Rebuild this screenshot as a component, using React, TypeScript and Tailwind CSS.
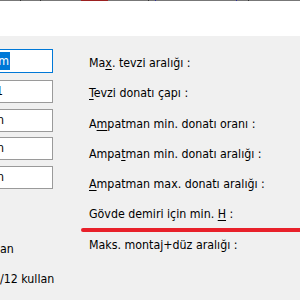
import React from "react";

const U = ({ children }: { children: React.ReactNode }) => (
  <span className="underline decoration-1 underline-offset-2">{children}</span>
);

function Box({ children, focused = false, className = "" }: { children?: React.ReactNode; focused?: boolean; className?: string }) {
  return (
    <div
      className={
        "ml-[-30px] w-[83px] bg-white flex items-center justify-end " +
        (focused ? "h-[24px] border border-[#0078d7]" : "h-[23px] border border-[#9a9a9a]") +
        " " +
        className
      }
    >
      {children}
    </div>
  );
}

export default function App() {
  return (
    <div
      className="w-[300px] h-[300px] overflow-hidden bg-[#f0f0f0] text-[12.3px] text-black leading-none"
      style={{ fontFamily: '"DejaVu Sans Condensed", "DejaVu Sans", sans-serif' }}
    >
      <div className="flex h-[1px] bg-[#777777]">
        <div className="w-[20px]" />
        <div className="w-[1px] bg-[#333333]" />
        <div className="w-[19px]" />
        <div className="w-[1px] bg-[#333333]" />
        <div className="w-[40px]" />
        <div className="w-[27px] bg-[#9b2020]" />
        <div className="w-[40px]" />
        <div className="w-[1px] bg-[#333333]" />
        <div className="w-[6px]" />
        <div className="w-[1px] bg-[#3030a0]" />
        <div className="w-[80px]" />
        <div className="w-[1px] bg-[#3030a0]" />
        <div className="w-[11px]" />
        <div className="w-[1px] bg-[#333333]" />
      </div>
      <div className="h-[35px] bg-white" />
      <div className="flex">
        <div className="w-[89px] flex flex-col pt-[13px]">
          <Box focused className="pr-[42px]">
            <span className="bg-[#0078d7] text-white h-[18px] pl-[30px] pr-[1px] flex items-center">m</span>
          </Box>
          <Box className="mt-[7px] pr-[49px]">1</Box>
          <Box className="mt-[6px] pr-[48px]">n</Box>
          <Box className="mt-[5px] pr-[48px]">n</Box>
          <Box className="mt-[6px] pr-[48px]">n</Box>
          <div className="mt-[53px] h-[14px] leading-[14px]">an</div>
          <div className="mt-[16px] h-[14px] leading-[14px]">/12 kullan</div>
        </div>
        <div className="flex flex-col pt-[20px] gap-[16.3px] whitespace-nowrap">
          <div className="h-[14px] leading-[14px]">Ma<U>x</U>. tevzi aralığı :</div>
          <div className="h-[14px] leading-[14px]"><U>T</U>evzi donatı çapı :</div>
          <div className="h-[14px] leading-[14px]">A<U>m</U>patman min. donatı oranı :</div>
          <div className="h-[14px] leading-[14px]">Ampa<U>t</U>man min. donatı aralığı :</div>
          <div className="h-[14px] leading-[14px]"><U>A</U>mpatman max. donatı aralığı :</div>
          <div className="relative h-[14px] leading-[14px]">
            Gövde demiri için min. <U>H</U> :
            <div className="absolute left-[-8px] top-[21px] w-[240px] h-[4px] rounded-full bg-[#e8202a]" />
          </div>
          <div className="h-[14px] leading-[14px]">Maks. montaj+düz aralığı :</div>
        </div>
      </div>
    </div>
  );
}
